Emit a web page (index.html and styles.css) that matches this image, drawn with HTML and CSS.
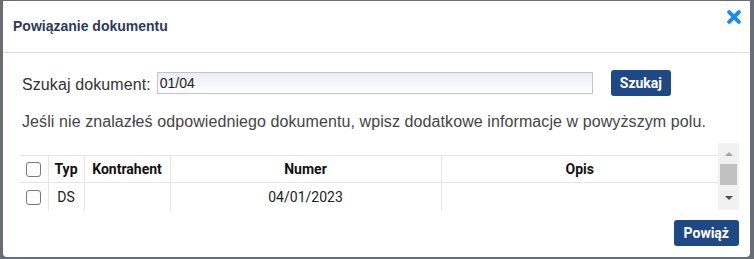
FILE: index.html
```html
<!DOCTYPE html>
<html lang="pl">
<head>
  <meta charset="utf-8" />
  <title>Powiązanie dokumentu</title>
  <link rel="stylesheet" href="styles.css">
</head>
<body>
  <div class="dialog">
    <div class="dialog-header">
      <span class="dialog-title">Powiązanie dokumentu</span>
      <svg class="dialog-close" viewBox="0 0 14 14" width="14" height="14">
        <path d="M2.2 2.2 L11.8 11.8 M11.8 2.2 L2.2 11.8" stroke="#1a8cf0" stroke-width="4" stroke-linecap="round" />
      </svg>
    </div>

    <div class="dialog-body">
      <div class="search-row">
        <label class="search-label" for="search">Szukaj dokument:</label>
        <input id="search" class="search-input" type="text" value="01/04" />
        <div class="btn btn-search">Szukaj</div>
      </div>

      <p class="info">Jeśli nie znalazłeś odpowiedniego dokumentu, wpisz dodatkowe informacje w powyższym polu.</p>

      <div class="grid-wrapper">
        <div class="grid-area">
          <table class="grid">
            <colgroup>
              <col style="width: 29px" />
              <col style="width: 36px" />
              <col style="width: 86px" />
              <col style="width: 271px" />
              <col />
            </colgroup>
            <thead>
              <tr>
                <th><span class="checkbox"></span></th>
                <th>Typ</th>
                <th>Kontrahent</th>
                <th>Numer</th>
                <th>Opis</th>
              </tr>
            </thead>
            <tbody>
              <tr>
                <td><span class="checkbox"></span></td>
                <td>DS</td>
                <td></td>
                <td>04/01/2023</td>
                <td></td>
              </tr>
            </tbody>
          </table>
        </div>
        <div class="scrollbar">
          <span class="arrow-up"></span>
          <span class="thumb"></span>
          <span class="arrow-down"></span>
        </div>
      </div>

      <div class="dialog-footer">
        <div class="btn">Powiąż</div>
      </div>
    </div>
  </div>
</body>
</html>
```

FILE: styles.css
```css
*, *::before, *::after {
  box-sizing: border-box;
}

body {
  margin: 0;
  background: #676c77;
  font-family: "Liberation Sans", Arial, sans-serif;
  overflow: hidden;
}

.dialog {
  margin: 1px 0 0 3px;
  width: 747px;
  height: 256px;
  background: white;
  border-radius: 0 0 4px 4px;
  display: flex;
  flex-direction: column;
}

.dialog-header {
  height: 52px;
  border-bottom: 1px solid #dcdcdc;
  display: flex;
  justify-content: space-between;
  align-items: flex-start;
  padding: 0 9px 0 10px;
}

.dialog-title {
  margin-top: 17px;
  font-size: 14px;
  line-height: 16px;
  font-weight: bold;
  color: #2b3a5c;
}

.dialog-close {
  margin-top: 9px;
}

.dialog-body {
  padding: 17px 11px 0 16px;
}

.search-row {
  display: flex;
  align-items: center;
  height: 26px;
}

.search-label {
  padding-left: 3px;
  font-size: 16px;
  line-height: 18px;
  letter-spacing: 0.1px;
  color: #333;
  margin-top: 4px;
}

.search-input {
  margin-left: 6px;
  width: 436px;
  height: 22px;
  border: 1px solid #c4c4c4;
  background: linear-gradient(#e9edf3, #ffffff);
  padding: 0 2px;
  font-family: "Liberation Sans", Arial, sans-serif;
  font-size: 14px;
  color: #222;
  outline: none;
}

.btn {
  display: inline-flex;
  align-items: center;
  justify-content: center;
  height: 26px;
  padding: 0 10px;
  border-radius: 3px;
  background: #1f4886;
  color: white;
  font-family: Roboto, sans-serif;
  font-size: 14px;
  font-weight: bold;
}

.btn-search {
  margin-left: 18px;
  padding: 0 9px;
}

.info {
  margin: 17px 0 0;
  padding-left: 3px;
  font-size: 16px;
  line-height: 18px;
  letter-spacing: 0.09px;
  color: #444;
}

.grid-wrapper {
  margin-top: 12px;
  display: flex;
  height: 67px;
}

.grid-area {
  flex: 1;
  padding-top: 12px;
}

.grid {
  width: 100%;
  border-collapse: collapse;
  table-layout: fixed;
  font-family: Roboto, sans-serif;
  font-size: 14px;
  color: #222;
}

.grid th, .grid td {
  padding: 0;
  text-align: center;
  border-left: 1px solid #e6e6e6;
}

.grid th:first-child, .grid td:first-child {
  border-left: none;
}

.grid th {
  height: 27px;
  font-weight: bold;
  color: #111;
  border-top: 1px solid #e6e6e6;
  border-bottom: 1px solid #e6e6e6;
}

.grid td {
  height: 28px;
}

.checkbox {
  display: inline-block;
  width: 15px;
  height: 15px;
  border: 1px solid #7a7a7a;
  border-radius: 3px;
  vertical-align: middle;
}

.scrollbar {
  width: 21px;
  background: #f1f1f1;
  display: flex;
  flex-direction: column;
  align-items: center;
}

.arrow-up {
  margin-top: 9px;
  border-left: 4px solid transparent;
  border-right: 4px solid transparent;
  border-bottom: 4px solid #a3a3a3;
}

.thumb {
  margin-top: 8px;
  width: 17px;
  height: 21px;
  background: #c1c1c1;
}

.arrow-down {
  margin-top: 11px;
  border-left: 4px solid transparent;
  border-right: 4px solid transparent;
  border-top: 4px solid #505050;
}

.dialog-footer {
  display: flex;
  justify-content: flex-end;
  margin-top: 10px;
}
```
